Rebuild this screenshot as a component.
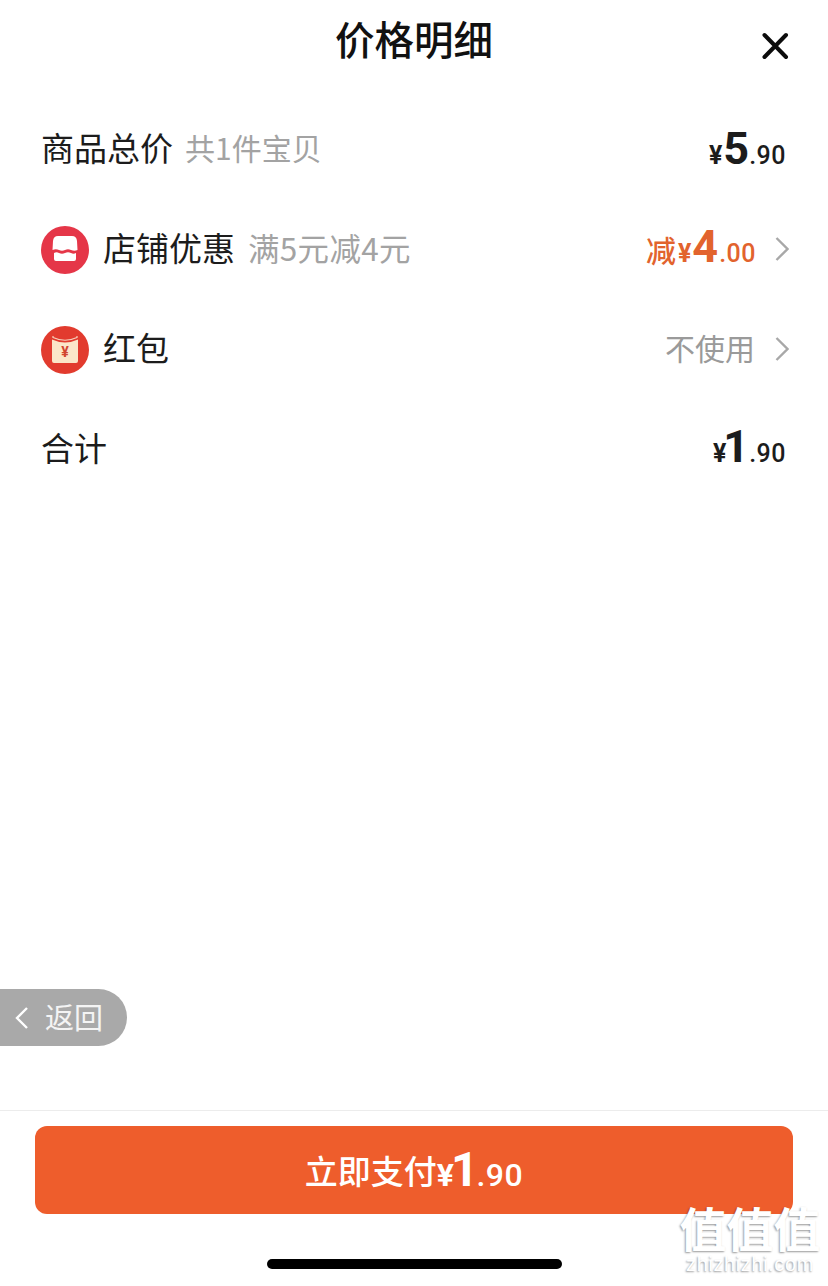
<div class="page">
	<header class="title-bar">
		<h1>价格明细</h1>
		<button class="close" aria-label="关闭">
			<svg width="30" height="30" viewBox="0 0 30 30">
				<path d="M4.5 4 L26 26 M26 4 L4.5 26" stroke="#0c0c0c" stroke-width="4" stroke-linecap="round" fill="none" />
			</svg>
		</button>
	</header>

	<section class="rows">
		<div class="row">
			<span class="label">商品总价</span>
			<span class="note first">共1件宝贝</span>
			<span class="price"><i>¥</i><b>5</b><em>.90</em></span>
		</div>

		<div class="row">
			<svg class="badge" viewBox="0 0 48 48">
				<circle cx="24" cy="24" r="24" fill="#e53648" />
				<!-- shop awning and counter, split by a wavy gap -->
				<path d="M17 10 H31 Q35.5 10 36 15 L36.5 24 Q33.5 25.5 30 24 Q27 22.5 24 24 Q21 25.5 18 24 Q15 22.5 11.5 24 L12 15 Q12.5 10 17 10 Z" fill="#fff" />
				<path d="M13 27 Q15.5 25.5 18 27 Q21 28.5 24 27 Q27 25.5 30 27 Q32.5 28.5 35 27 V33 Q35 35 33 35 H15 Q13 35 13 33 Z" fill="#fff" />
			</svg>
			<span class="label">店铺优惠</span>
			<span class="note">满5元减4元</span>
			<span class="price discount"><span class="cut">减</span><i>¥</i><b>4</b><em>.00</em></span>
			<svg class="chevron" viewBox="0 0 14 26">
				<path d="M1.5 2 L12.5 13 L1.5 24" />
			</svg>
		</div>

		<div class="row">
			<svg class="badge" viewBox="0 0 48 48">
				<circle cx="24" cy="24" r="24" fill="#e23b2e" />
				<!-- red packet with its flap arc -->
				<path d="M11 13.5 Q24 19.5 37 13.5 V35 Q37 37 35 37 H13 Q11 37 11 35 Z" fill="#fbe6c8" />
				<path d="M12 10 V11.5 Q24 17 36 11.5 V10" stroke="#f6d3bd" stroke-width="1.2" fill="none" />
				<text x="24" y="31" text-anchor="middle" class="badge-yen">¥</text>
			</svg>
			<span class="label">红包</span>
			<span class="unused">不使用</span>
			<svg class="chevron" viewBox="0 0 14 26">
				<path d="M1.5 2 L12.5 13 L1.5 24" />
			</svg>
		</div>

		<div class="row">
			<span class="label">合计</span>
			<span class="price total"><i>¥</i><b>1</b><em>.90</em></span>
		</div>
	</section>

	<button class="back">
		<svg width="14" height="24" viewBox="0 0 14 24">
			<path d="M12 2 L2 12 L12 22" stroke="#fff" stroke-width="2.4" fill="none" />
		</svg>
		<span>返回</span>
	</button>

	<footer class="pay-bar">
		<button class="pay">
			<span class="pay-text">立即支付</span><span class="price"><i>¥</i><b>1</b><em>.90</em></span>
		</button>
		<div class="home-indicator"></div>
	</footer>

	<div class="watermark">
		<div class="wm-glyphs">值值值</div>
		<div class="wm-url">zhizhizhi.com</div>
	</div>
</div>

<style>
	:global(body) {
		margin: 0;
		background: #fff;
	}

	.page {
		position: relative;
		width: 828px;
		height: 1286px;
		overflow: hidden;
		display: flex;
		flex-direction: column;
		background: #fff;
		font-family: "Noto Sans CJK SC", "Noto Sans", sans-serif;
		color: #1c1c1c;
	}

	.title-bar {
		position: relative;
		height: 100px;
		flex-shrink: 0;
	}

	h1 {
		margin: 0;
		padding-top: 10px;
		font-size: 39.5px;
		line-height: 56px;
		font-weight: 500;
		text-align: center;
		color: #111;
	}

	.close {
		position: absolute;
		top: 31px;
		left: 760px;
		width: 30px;
		height: 30px;
		padding: 0;
		border: 0;
		background: none;
		display: block;
	}

	.close svg {
		display: block;
	}

	.rows {
		display: flex;
		flex-direction: column;
		padding: 0 39px 0 41px;
	}

	.row {
		height: 100px;
		display: flex;
		align-items: center;
	}

	.label {
		margin-bottom: 6px;
		font-size: 33px;
		line-height: 40px;
		font-weight: 400;
	}

	.note {
		margin-left: 13px;
		margin-bottom: 6px;
		font-size: 31.5px;
		line-height: 40px;
		letter-spacing: 0.3px;
		color: #a3a3a3;
	}

	.note.first {
		margin-left: 12px;
		font-size: 30px;
		letter-spacing: 0;
	}

	.badge {
		width: 48px;
		height: 48px;
		margin-right: 14px;
		flex-shrink: 0;
	}

	.badge-yen {
		font-family: "Roboto", sans-serif;
		font-size: 14px;
		font-weight: 700;
		fill: #d2452f;
	}

	.price {
		margin-left: auto;
		margin-right: 3px;
		margin-bottom: 3px;
		display: inline-flex;
		align-items: baseline;
		font-family: "Roboto", sans-serif;
		font-weight: 500;
		color: #1c1c1c;
	}

	.price i {
		font-style: normal;
		font-size: 25px;
		font-weight: 700;
		margin-right: 1px;
	}

	.price b {
		font-size: 45px;
		line-height: 46px;
		font-weight: 700;
	}

	.price em {
		font-style: normal;
		font-size: 25px;
		letter-spacing: 0.5px;
	}

	.discount {
		margin-right: 19px;
		margin-bottom: 5px;
		color: #e2632d;
	}

	.discount em {
		margin-left: 1px;
	}

	.discount .cut {
		font-family: "Noto Sans CJK SC", sans-serif;
		font-size: 30px;
		font-weight: 500;
		margin-right: 2px;
	}

	.total {
		margin-bottom: 6px;
	}

	/* the 1 is narrow, so the yen sign tucks in against it */
	.total i {
		letter-spacing: -6px;
		margin-right: 3px;
	}

	.chevron {
		width: 14px;
		height: 26px;
		margin-bottom: 2px;
		flex-shrink: 0;
		fill: none;
		stroke: #a8a8a8;
		stroke-width: 2.4;
	}

	.unused {
		margin-left: auto;
		margin-right: 20px;
		margin-bottom: 6px;
		font-size: 30px;
		line-height: 40px;
		color: #9a9a9a;
	}

	.back {
		position: absolute;
		left: 0;
		top: 989px;
		width: 127px;
		height: 57px;
		padding: 0 0 0 15px;
		border: 0;
		border-radius: 0 28.5px 28.5px 0;
		background: #a9a9a9;
		color: #f4f4f4;
		display: flex;
		align-items: center;
		gap: 16px;
		font-family: inherit;
		font-size: 29px;
	}

	.back span {
		margin-bottom: 4px;
	}

	.pay-bar {
		margin-top: auto;
		height: 176px;
		box-sizing: border-box;
		border-top: 1px solid #ececec;
		padding: 15px 35px 0;
		display: flex;
		flex-direction: column;
		align-items: center;
	}

	.pay {
		width: 758px;
		height: 88px;
		flex-shrink: 0;
		padding: 0;
		border: 0;
		border-radius: 12px;
		background: #ee5d2c;
		color: #fff;
		display: flex;
		align-items: center;
		justify-content: center;
		font-family: inherit;
	}

	.pay-text {
		font-size: 33px;
		font-weight: 500;
	}

	.pay .price {
		margin: 0;
		color: #fff;
	}

	.pay .price b {
		font-size: 48px;
		letter-spacing: -2px;
	}

	.pay .price em {
		font-size: 32px;
	}

	.pay .price i {
		font-size: 32px;
		margin-right: 0;
		letter-spacing: -3px;
	}

	.home-indicator {
		width: 295px;
		height: 10px;
		margin-top: 45px;
		border-radius: 5px;
		background: #000;
	}

	.watermark {
		position: absolute;
		left: 678px;
		top: 1201px;
		width: 144px;
		text-align: center;
		color: #fff;
		text-shadow: -1px 1px 2px rgba(0, 0, 0, 0.4);
		pointer-events: none;
	}

	.wm-glyphs {
		font-size: 47px;
		line-height: 52px;
		font-weight: 700;
		white-space: nowrap;
	}

	.wm-url {
		font-family: "Liberation Sans", sans-serif;
		font-size: 20px;
		line-height: 22px;
		letter-spacing: 0.6px;
	}
</style>
